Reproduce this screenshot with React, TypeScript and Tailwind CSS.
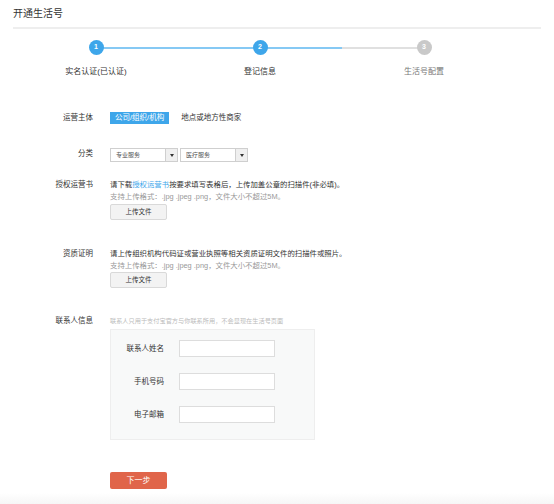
import React from "react";

const FONT = "font-['Liberation_Sans','Noto_Sans_CJK_SC',sans-serif]";

function Step({ n, label, active }: { n: number; label: string; active: boolean }) {
  return (
    <div className="flex w-[164px] flex-col items-center">
      <div
        className={`relative z-10 flex h-[15px] w-[15px] items-center justify-center rounded-full text-[7px] font-bold text-white ${
          active ? "bg-[#3ea6ea]" : "bg-[#c9c9c9]"
        }`}
      >
        {n}
      </div>
      <div className={`mt-[12px] text-[8px] leading-[10px] ${active ? "text-[#333]" : "text-[#777]"}`}>
        {label}
      </div>
    </div>
  );
}

function Row({ label, children, className = "" }: { label: string; children: React.ReactNode; className?: string }) {
  return (
    <div className={`flex ${className}`}>
      <div className="w-[93px] shrink-0 text-right text-[7.5px] leading-[12px] text-[#333]">{label}</div>
      <div className="ml-[17px] flex-1">{children}</div>
    </div>
  );
}

function Select({ value }: { value: string }) {
  return (
    <div className="flex h-[14px] w-[68px] items-stretch border border-[#cfcfcf] bg-white">
      <div className="flex-1 pl-[5px] text-[6px] leading-[12px] text-[#555]">{value}</div>
      <div className="flex w-[12px] items-center justify-center border-l border-[#cfcfcf] bg-[#efefef]">
        <div className="h-0 w-0 border-x-[2px] border-t-[3px] border-x-transparent border-t-[#333]" />
      </div>
    </div>
  );
}

function UploadButton({ className = "" }: { className?: string }) {
  return (
    <button
      className={`flex h-[16px] w-[57px] items-center justify-center rounded-[2px] border border-[#d9d9d9] bg-[#f3f3f3] text-[6.5px] text-[#333] ${className}`}
    >
      上传文件
    </button>
  );
}

function Field({ label }: { label: string }) {
  return (
    <div className="flex items-center">
      <div className="w-[53px] text-right text-[7.5px] text-[#333]">{label}</div>
      <div className="ml-[15px] h-[17px] w-[96px] border border-[#ddd] bg-white" />
    </div>
  );
}

export default function App() {
  return (
    <div className={`relative min-h-[504px] w-[554px] bg-white ${FONT}`}>
      <div className="px-[13px] pt-[7px]">
        <h1 className="text-[10px] leading-[14px] text-[#333]">开通生活号</h1>
        <div className="mt-[6px] h-[2px] w-[528px] bg-[#eeeeee]" />
      </div>

      {/* steps */}
      <div className="relative ml-[14px] mt-[11px] flex">
        <div className="absolute left-[82px] top-[7px] h-[1.5px] w-[246px] bg-[#86c9f4]" />
        <div className="absolute left-[328px] top-[7px] h-[1.5px] w-[82px] bg-[#e0e0e0]" />
        <Step n={1} label="实名认证(已认证)" active />
        <Step n={2} label="登记信息" active />
        <Step n={3} label="生活号配置" active={false} />
      </div>

      <div className="mt-[35px]">
        <Row label="运营主体">
          <div className="flex items-center">
            <span className="bg-[#3ea6ea] px-[5px] text-[7.5px] leading-[12px] text-white">公司/组织/机构</span>
            <span className="ml-[12px] text-[7.5px] leading-[12px] text-[#333]">地点或地方性商家</span>
          </div>
        </Row>

        <Row label="分类" className="mt-[24px]">
          <div className="flex gap-[2px]">
            <Select value="专业服务" />
            <Select value="医疗服务" />
          </div>
        </Row>

        <Row label="授权运营书" className="mt-[17px]">
          <div className="text-[7.4px] leading-[12px] text-[#333]">
            请下载<span className="text-[#3ea6ea]">授权运营书</span>按要求填写表格后，上传加盖公章的扫描件(非必填)。
          </div>
          <div className="text-[7.4px] leading-[12px] text-[#999]">支持上传格式：.jpg .jpeg .png，文件大小不超过5M。</div>
          <UploadButton className="mt-[1px]" />
        </Row>

        <Row label="资质证明" className="mt-[28px]">
          <div className="text-[7.4px] leading-[12px] text-[#333]">
            请上传组织机构代码证或营业执照等相关资质证明文件的扫描件或照片。
          </div>
          <div className="text-[7.4px] leading-[11px] text-[#999]">支持上传格式：.jpg .jpeg .png，文件大小不超过5M。</div>
          <UploadButton className="mt-[1px]" />
        </Row>

        <Row label="联系人信息" className="mt-[27px]">
          <div className="text-[6.2px] leading-[12px] text-[#bbb]">联系人只用于支付宝官方与你联系所用，不会显现在生活号页面</div>
          <div className="mt-[2px] flex w-[205px] flex-col gap-[16px] border border-[#eee] bg-[#f8f9f9] pb-[16px] pt-[10px]">
            <Field label="联系人姓名" />
            <Field label="手机号码" />
            <Field label="电子邮箱" />
          </div>
          <button className="mt-[32px] flex h-[17px] w-[57px] items-center justify-center rounded-[2px] bg-[#e0654a] text-[8px] text-white">
            下一步
          </button>
        </Row>
      </div>
      <div className="absolute bottom-0 left-0 h-[11px] w-full bg-gradient-to-b from-white to-[#f6f6f6]" />
    </div>
  );
}
